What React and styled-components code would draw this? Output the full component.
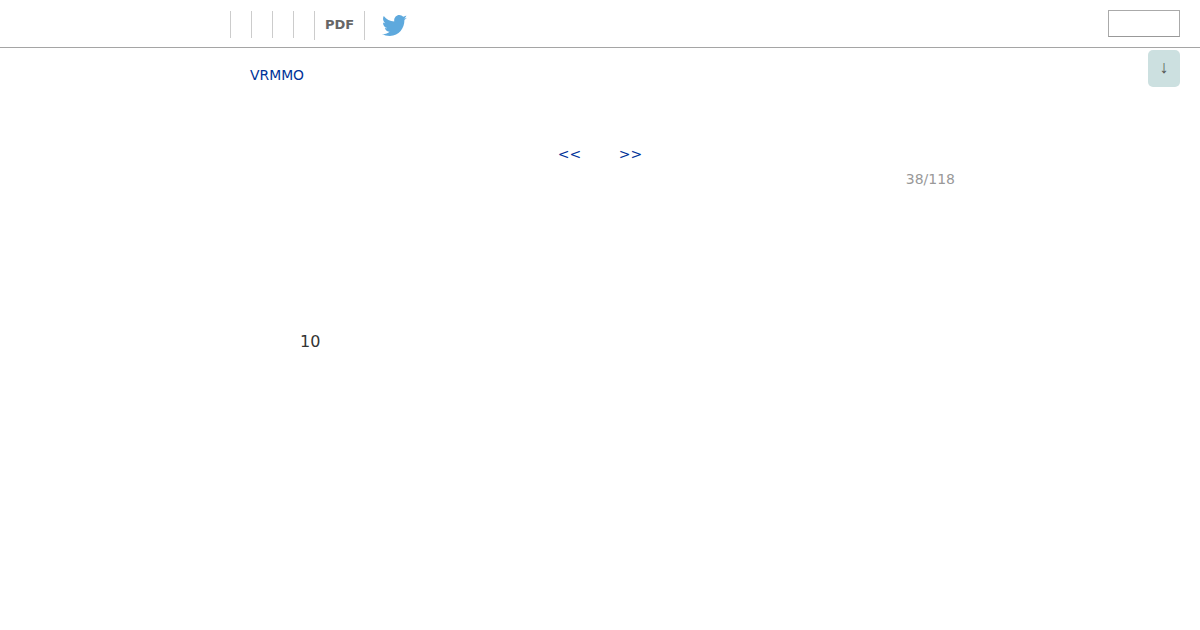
import React from "react";
import styled, { createGlobalStyle } from "styled-components";

const Global = createGlobalStyle`
  html, body { margin: 0; padding: 0; background: #fff; }
  body { font-family: "DejaVu Sans", sans-serif; color: #333; }
`;
const Page = styled.div`
  position: relative;
  height: 630px;
  overflow: hidden;
`;
const Header = styled.header`
  box-sizing: border-box;
  height: 48px;
  border-bottom: 1px solid #a5a5a5;
  padding: 11px 20px 0 230px;
  display: flex;
  align-items: flex-start;
`;
const Slot = styled.div`
  box-sizing: border-box;
  width: 21px;
  height: 27px;
  border-left: 1px solid #ccc;
`;
const PdfSlot = styled(Slot)`
  width: 50px;
  height: 29px;
  padding-left: 10px;
  font-size: 13px;
  font-weight: 700;
  line-height: 27px;
  color: #666;
`;
const TwitterLink = styled.a`
  display: block;
  box-sizing: border-box;
  height: 29px;
  border-left: 1px solid #ccc;
  padding: 4px 0 0 17px;
  line-height: 0;
`;
const Search = styled.input`
  box-sizing: border-box;
  width: 72px;
  height: 27px;
  margin: -1px 0 0 auto;
  padding: 0;
  border: 1px solid #aaa;
  border-bottom-color: #999;
  background: #fff;
  outline: none;
`;
const TopButton = styled.button`
  position: absolute;
  top: 50px;
  right: 20px;
  width: 32px;
  height: 37px;
  padding: 0 0 3px;
  border: 0;
  border-radius: 5px;
  background: #cce0e0;
  color: #555;
  font-family: "Liberation Sans", sans-serif;
  font-size: 18px;
  font-weight: 400;
`;
const Main = styled.main`
  padding: 19px 245px 0 250px;
`;
const Crumb = styled.a`
  display: block;
  font-size: 13.9px;
  line-height: 17px;
  color: #039;
`;
const Pager = styled.nav`
  margin: 62px -45px 0 -50px;
  display: flex;
  justify-content: center;
  gap: 37.5px;
  font-size: 14px;
  line-height: 17px;
  color: #039;
`;
const Count = styled.div`
  margin-top: 8px;
  text-align: right;
  font-size: 14px;
  line-height: 17px;
  color: #999;
`;
const Body = styled.p`
  margin: 144px 0 0 50px;
  font-size: 16px;
  line-height: 20px;
  color: #333;
`;

export default function App() {
  return (
    <Page>
      <Global />
      <Header>
        <Slot />
        <Slot />
        <Slot />
        <Slot />
        <PdfSlot>PDF</PdfSlot>
        <TwitterLink>
          <svg width="25" height="22" viewBox="0 0 24 20" preserveAspectRatio="none">
            <path
              fill="#5ea9dd"
              d="M24 2.4c-.9.4-1.8.6-2.8.8 1-.6 1.8-1.6 2.2-2.7-1 .6-2 1-3.100 1.200C19.300.7 18 0 16.600 0c-2.700 0-4.900 2.200-4.900 4.900 0 .4 0 .8.100 1.100C7.700 5.800 4.100 3.900 1.700.9c-.4.700-.7 1.600-.7 2.500 0 1.700.9 3.200 2.200 4.100-.8 0-1.600-.2-2.200-.6v.1c0 2.400 1.700 4.400 3.900 4.800-.4.100-.8.200-1.300.2-.3 0-.6 0-.9-.1.600 2 2.400 3.400 4.600 3.400-1.700 1.300-3.800 2.100-6.100 2.100-.4 0-.8 0-1.200-.1C2.200 18.300 4.800 19.100 7.500 19.100c9.100 0 14-7.500 14-14v-.6c1-.7 1.800-1.500 2.500-2.100z"
            />
          </svg>
        </TwitterLink>
        <Search />
      </Header>
      <TopButton>↓</TopButton>
      <Main>
        <Crumb>VRMMO</Crumb>
        <Pager>
          <span>&lt;&lt;</span>
          <span>&gt;&gt;</span>
        </Pager>
        <Count>38/118</Count>
        <Body>10</Body>
      </Main>
    </Page>
  );
}
